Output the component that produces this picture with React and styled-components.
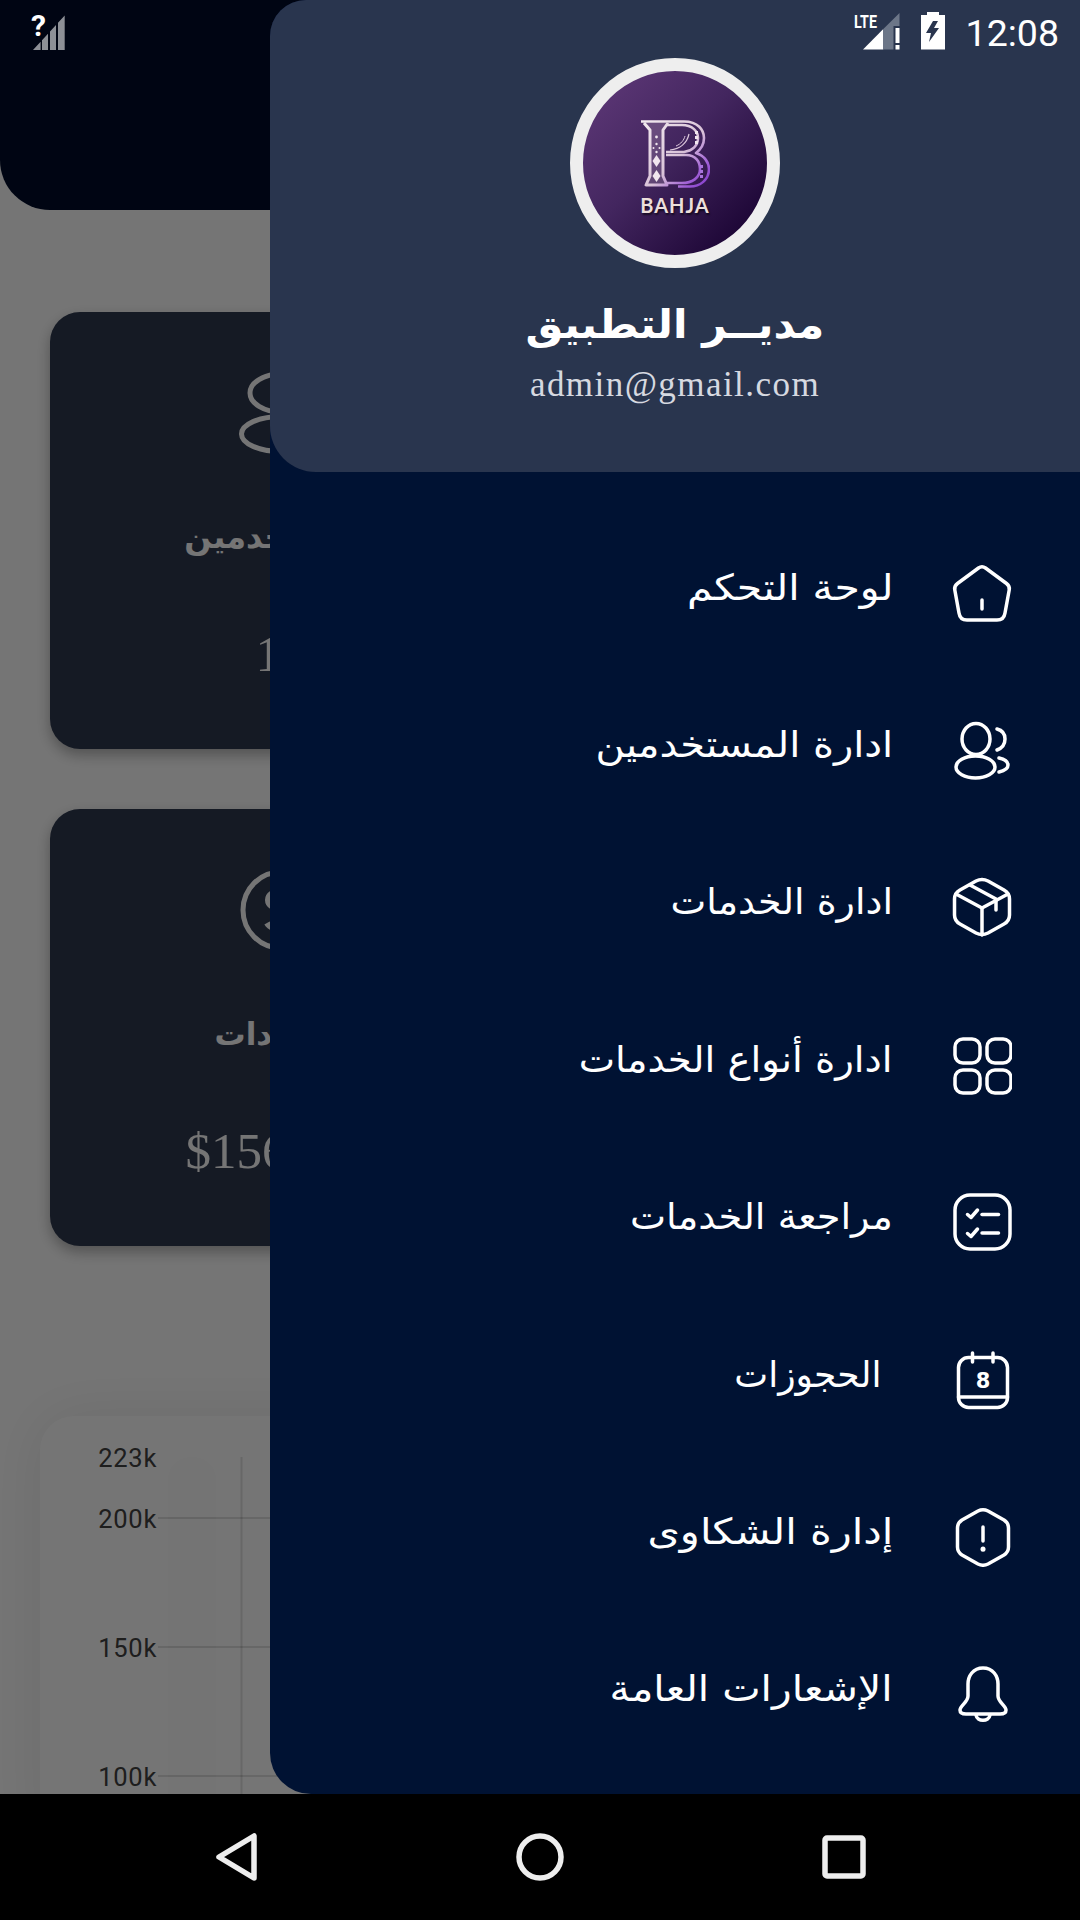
import React from "react";
import styled, { createGlobalStyle } from "styled-components";

const Global = createGlobalStyle`
  html, body { margin: 0; padding: 0; background: #000; }
  * { box-sizing: border-box; }
`;

const ARABIC = `"DejaVu Sans", "Noto Sans", sans-serif`;

const Screen = styled.div`
  position: relative;
  width: 1080px;
  height: 1920px;
  overflow: hidden;
  display: flex;
  flex-direction: column;
  background: #000;
  font-family: Roboto, sans-serif;
`;

const Page = styled.main`
  position: relative;
  height: 1794px;
  background: #fff;
  overflow: hidden;
`;

const TopBanner = styled.div`
  height: 210px;
  background: #000d2b;
  border-bottom-left-radius: 50px;
  border-bottom-right-radius: 50px;
`;

const Cards = styled.section`
  display: flex;
  flex-direction: column;
  gap: 60px;
  width: 462px;
  margin: 102px 0 0 50px;
`;

const Card = styled.article`
  height: 437px;
  border-radius: 30px;
  background: #2e3950;
  box-shadow: 0 6px 14px rgba(0, 0, 0, 0.3);
  color: #fff;
  display: flex;
  flex-direction: column;
  align-items: center;
  padding-top: 60px;
`;

const CardLabel = styled.div`
  margin-top: 58px;
  height: 50px;
  font: 700 ${(p) => p.$size}px/50px ${ARABIC};
  white-space: nowrap;
`;

const CardValue = styled.div`
  margin-top: 60px;
  font: 400 51px/64px "Liberation Serif", serif;
  white-space: nowrap;
`;

const ChartCard = styled.section`
  width: 900px;
  height: 420px;
  margin: 170px 0 0 40px;
  border-radius: 34px 34px 0 0;
  background: #fff;
  box-shadow: 0 0 60px rgba(0, 0, 0, 0.08);
  overflow: hidden;
`;

const Scrim = styled.div`
  position: absolute;
  inset: 0;
  background: rgba(0, 0, 0, 0.54);
`;

const Drawer = styled.aside`
  position: absolute;
  top: 0;
  right: 0;
  bottom: 0;
  width: 810px;
  background: #001233;
  border-radius: 36px 0 0 41px;
  display: flex;
  flex-direction: column;
`;

const DrawerHeader = styled.header`
  height: 472px;
  padding: 58px 0 0 0;
  background: #29354e;
  border-radius: 36px 0 0 46px;
  display: flex;
  flex-direction: column;
  align-items: center;
  color: #fff;
`;

const Avatar = styled.div`
  width: 210px;
  height: 210px;
  border: 13px solid #eeeeee;
  border-radius: 50%;
  background: linear-gradient(135deg, #613a7a 0%, #43265f 45%, #1f0838 85%);
  display: flex;
  flex-direction: column;
  align-items: center;
  padding-top: 49px;
`;

const LogoText = styled.div`
  margin-top: 5px;
  font: 700 20px/24px Lato, sans-serif;
  letter-spacing: 1px;
  color: #ecdfdb;
  text-shadow: 1px 2px 2px rgba(0, 0, 0, 0.6);
`;

const Name = styled.h1`
  margin: 28px 0 0;
  font: 700 40px/56px ${ARABIC};
  white-space: nowrap;
  transform: scaleX(1.06);
`;

const Email = styled.div`
  margin-top: 11px;
  font: 400 35px/44px "Liberation Serif", serif;
  letter-spacing: 1.45px;
  color: #d6d9e0;
`;

const Menu = styled.nav`
  display: flex;
  flex-direction: column;
  padding-top: 42px;
`;

const Row = styled.a`
  direction: rtl;
  height: 157.4px;
  display: flex;
  align-items: center;
  gap: 59px;
  padding-right: 68px;
  color: #fff;
`;

const RowLabel = styled.span`
  font: 400 36px/50px ${ARABIC};
  white-space: pre;
  transform-origin: right center;
  transform: translateY(-5px) scaleX(${(p) => p.$stretch});
`;

const Glyph = styled.svg`
  flex: none;
  width: 60px;
  height: 60px;
  fill: none;
  stroke: #fff;
  stroke-width: 3.5;
  stroke-linecap: round;
  stroke-linejoin: round;
`;

const CalendarDay = styled.text`
  font: 700 21px "DejaVu Sans", sans-serif;
  fill: #fff;
  stroke: none;
  text-anchor: middle;
`;

const StatusBar = styled.div`
  position: absolute;
  top: 0;
  left: 0;
  right: 0;
  height: 65px;
  padding: 13px 21px 0 28px;
  display: flex;
  align-items: flex-start;
  justify-content: space-between;
  color: #fff;
`;

const StatusGroup = styled.div`
  display: flex;
  align-items: flex-start;
  gap: 21px;
`;

const StatusIcon = styled.svg`
  display: block;
  overflow: visible;
  margin-top: ${(p) => p.$lift || 0}px;
`;

const Clock = styled.span`
  font: 400 37.5px/41px Roboto, sans-serif;
`;

const LteText = styled.text`
  font: 700 19px Roboto, sans-serif;
  fill: #fff;
`;

const SimText = styled.text`
  font: 700 30px Roboto, sans-serif;
  fill: #fff;
`;

const NavBar = styled.footer`
  flex: 1;
  background: #000;
  display: flex;
  align-items: center;
  justify-content: center;
  gap: 250px;
`;

const NavIcon = styled.svg`
  width: 54px;
  height: 54px;
  fill: none;
  stroke: #eeeeee;
  stroke-width: 5.5;
  stroke-linejoin: round;
`;

const AxisLabel = styled.text`
  font: 400 25.5px Roboto, sans-serif;
  fill: #424242;
  text-anchor: end;
  letter-spacing: 0.7px;
`;

const menuItems = [
  { label: "لوحة التحكم", icon: "home", stretch: 1.138 },
  { label: "ادارة المستخدمين", icon: "users", stretch: 1.11 },
  { label: "ادارة الخدمات", icon: "box", stretch: 1.055 },
  { label: "ادارة أنواع الخدمات", icon: "grid", stretch: 1.073 },
  { label: "مراجعة الخدمات", icon: "check", stretch: 1.065 },
  { label: "\u00a0الحجوزات", icon: "calendar", stretch: 1.0 },
  { label: "إدارة الشكاوى", icon: "warn", stretch: 1.153 },
  { label: "الإشعارات العامة", icon: "bell", stretch: 1.134 },
];

const iconParts = {
  home: (
    <>
      <path d="M26.5 5 Q30 2.5 33.5 5 L54.5 20.5 Q58 23 57.2 27 L53 50 Q52 57 45 57 L15 57 Q8 57 7 50 L2.8 27 Q2 23 5.5 20.5 Z" />
      <path d="M30 37 V46" />
    </>
  ),
  users: (
    <>
      <ellipse cx="24" cy="19" rx="14" ry="15.5" />
      <ellipse cx="23.5" cy="47" rx="19.5" ry="11" />
      <path d="M45 9 Q53 11 53 19 Q53 27 45 30" />
      <path d="M47 38 Q56 40 56 45 Q56 50 47 52" />
    </>
  ),
  box: (
    <>
      <path d="M24 4 Q30 1 36 4 L52 13 Q57.5 16 57.5 22 L57.5 38 Q57.5 44 52 47 L36 56 Q30 59 24 56 L8 47 Q2.5 44 2.5 38 L2.5 22 Q2.5 16 8 13 Z" />
      <path d="M4 17 L30 31 L56 17" />
      <path d="M30 31 V58" />
      <path d="M18 8 L44 22 V33" />
    </>
  ),
  grid: (
    <>
      <rect x="3" y="4" width="25" height="24" rx="8" />
      <rect x="35" y="4" width="24" height="24" rx="8" />
      <rect x="3" y="35" width="25" height="23" rx="8" />
      <rect x="35" y="35" width="24" height="23" rx="8" />
    </>
  ),
  check: (
    <>
      <rect x="3" y="3" width="55" height="54" rx="15" />
      <path d="M15.500 22.500 L19 25.500 L25.500 18" />
      <path d="M15.500 41.500 L19 44.500 L25.500 37" />
      <path d="M30 22.500 H46.500" />
      <path d="M30 41 H46.500" />
    </>
  ),
  calendar: (
    <>
      <rect x="6.500" y="7.500" width="49" height="50" rx="10" />
      <path d="M20.500 3 V12" />
      <path d="M41 3 V12" />
      <path d="M6.500 47 H55.500" />
      <CalendarDay x="31" y="38">8</CalendarDay>
    </>
  ),
  warn: (
    <>
      <path d="M26 4 Q31 1.500 36 4 L52 13 Q56.500 16 56.500 21 L56.500 40 Q56.500 45 52 48 L36 57 Q31 59.500 26 57 L10 48 Q5.500 45 5.500 40 L5.500 21 Q5.500 16 10 13 Z" />
      <path d="M31 20 V34" />
      <path d="M31 42 V42.200" strokeWidth="5" />
    </>
  ),
  bell: (
    <>
      <path d="M31 4 C21 4 16 12 16 20 L16 32 C16 38 8 42 8 46 C8 49 11 50 14 50 L48 50 C51 50 54 49 54 46 C54 42 46 38 46 32 L46 20 C46 12 41 4 31 4 Z" />
      <path d="M24 51 C25 58 37 58 38 51" />
    </>
  ),
};

function MenuGlyph({ name }) {
  return <Glyph viewBox="0 0 60 60">{iconParts[name]}</Glyph>;
}

function BahjaMark() {
  return (
    <svg width="70" height="68" viewBox="0 0 70 68" fill="none">
      <defs>
        <linearGradient id="bmark" x1="0" y1="0" x2="70" y2="68" gradientUnits="userSpaceOnUse">
          <stop offset="0" stopColor="#f4edf1" />
          <stop offset="0.55" stopColor="#d9c2d8" />
          <stop offset="0.8" stopColor="#a05fd6" />
          <stop offset="1" stopColor="#7e35c9" />
        </linearGradient>
      </defs>
      <path d="M4 3 L10 10 L10 56 L6 65 L27 65 L23 56 L23 10 L28 3 Z" fill="#d9c5d8" fillOpacity="0.22" />
      <g stroke="url(#bmark)" strokeWidth="2.6" strokeLinejoin="round">
        <path d="M1 1.500 L44 1.500 C58 1.500 64 10 64 18 C64 25 60 30 56 33 C65 36 69 43 69 49 C69 60 60 66.500 50 66.500 L38 66.500" />
        <path d="M26 5 L42 5 C52 5 58 11 58 18 C58 26 52 31 44 32 L26 32" />
        <path d="M26 35 L46 35 C56 35 60 42 60 49 C60 58 52 63 42 63 L26 63" />
        <path d="M4 3 L10 10 L10 56 L6 65 L27 65 L23 56 L23 10 L28 3" strokeWidth="3" />
        <path d="M30 30 C40 29 47 23 49 14" strokeWidth="1.200" />
        <path d="M36 26 C41 24 44 20 45 16" strokeWidth="1" />
      </g>
      <g fill="#f1e6ee">
        <circle cx="16.500" cy="17" r="1.400" />
        <circle cx="16.500" cy="24" r="1.200" />
        <circle cx="13.500" cy="28" r="1" />
        <circle cx="19.500" cy="28" r="1" />
        <circle cx="16.500" cy="32" r="1.200" />
        <path d="M16.500 35 L20.500 41 L16.500 47 L12.500 41 Z" />
        <path d="M16.500 50 L20.500 56 L16.500 62 L12.500 56 Z" />
        <rect x="55" y="11" width="3" height="3" />
        <rect x="55" y="16" width="3" height="3" />
        <rect x="55" y="21" width="3" height="3" />
      </g>
      <g fill="#a974de">
        <rect x="60" y="45" width="3" height="3" />
        <rect x="60" y="50" width="3" height="3" />
        <rect x="60" y="55" width="3" height="3" />
      </g>
    </svg>
  );
}

function SimUnknown() {
  return (
    <StatusIcon $lift={-3.5} width="38" height="40" viewBox="0 0 38 40">
      <SimText x="3" y="25.500">?</SimText>
      <path d="M5 40 L12.600 31.700 V40 Z M14 40 V30.200 L20 23.700 V40 Z M22 40 V21.500 L28 15 V40 Z M30 40 V12.800 L36.700 5.500 V40 Z" fill="#8d9096" />
    </StatusIcon>
  );
}

function LteSignal() {
  return (
    <StatusIcon width="46" height="37" viewBox="0 0 46 37">
      <g transform="scale(0.75 1)">
        <LteText x="0" y="15">LTE</LteText>
      </g>
      <path d="M9 36.500 L29.300 16 V36.500 Z" fill="#fff" />
      <path d="M29.300 16 L45.500 0 V13 H39.500 V36.500 H29.300 Z" fill="#6c7688" />
      <path d="M41.500 15 H45.500 V30 H41.500 Z M41.500 32 H45.500 V36.500 H41.500 Z" fill="#fff" />
    </StatusIcon>
  );
}

function Battery() {
  return (
    <StatusIcon $lift={-1} width="24" height="38" viewBox="0 0 24 38">
      <path d="M6 0 H18 V3 H24 V37.500 H0 V3 H6 Z" fill="#fff" />
      <path d="M12 9 L5 21 H10 L8 30 L18 16 H13 L17 9 Z" fill="#29354e" />
    </StatusIcon>
  );
}

function Axis() {
  return (
    <svg width="900" height="420" viewBox="0 0 900 420">
      <rect x="128" y="41" width="48" height="380" rx="22" fill="#000" opacity="0.012" />
      <path d="M201.500 41 V420" stroke="#000" strokeOpacity="0.12" strokeWidth="2" />
      <path d="M118 102 H900 M118 231 H900 M118 360 H900" stroke="#000" strokeOpacity="0.12" strokeWidth="2" />
      <AxisLabel x="117" y="51">223k</AxisLabel>
      <AxisLabel x="117" y="112">200k</AxisLabel>
      <AxisLabel x="117" y="241">150k</AxisLabel>
      <AxisLabel x="117" y="370">100k</AxisLabel>
    </svg>
  );
}

export default function App() {
  return (
    <Screen>
      <Global />
      <Page>
        <TopBanner />
        <Cards>
          <Card>
            <svg width="84" height="82" viewBox="0 0 84 82" fill="none" stroke="#fff" strokeWidth="5">
              <ellipse cx="42" cy="21" rx="31" ry="19" />
              <ellipse cx="42" cy="62" rx="39.500" ry="17.500" />
            </svg>
            <CardLabel $size={32}>المستخدمين</CardLabel>
            <CardValue>12</CardValue>
          </Card>
          <Card>
            <svg width="82" height="82" viewBox="0 0 82 82" fill="none" stroke="#fff" strokeWidth="5">
              <circle cx="41" cy="41" r="38" />
              <path d="M54 28 C50 20 28 20 28 31 C28 44 56 38 56 52 C56 63 32 63 27 54 M41 14 V68" strokeWidth="6" />
            </svg>
            <CardLabel $size={31}>الايرادات</CardLabel>
            <CardValue>$156,000</CardValue>
          </Card>
        </Cards>
        <ChartCard>
          <Axis />
        </ChartCard>
        <Scrim />
        <Drawer>
          <DrawerHeader>
            <Avatar>
              <BahjaMark />
              <LogoText>BAHJA</LogoText>
            </Avatar>
            <Name>مديــر التطبيق</Name>
            <Email>admin@gmail.com</Email>
          </DrawerHeader>
          <Menu>
            {menuItems.map((item) => (
              <Row key={item.icon}>
                <MenuGlyph name={item.icon} />
                <RowLabel $stretch={item.stretch}>{item.label}</RowLabel>
              </Row>
            ))}
          </Menu>
        </Drawer>
        <StatusBar>
          <SimUnknown />
          <StatusGroup>
            <LteSignal />
            <Battery />
            <Clock>12:08</Clock>
          </StatusGroup>
        </StatusBar>
      </Page>
      <NavBar>
        <NavIcon viewBox="0 0 54 54">
          <path d="M10 27 L45 6 V48 Z" />
        </NavIcon>
        <NavIcon viewBox="0 0 54 54">
          <circle cx="27" cy="27" r="21" />
        </NavIcon>
        <NavIcon viewBox="0 0 54 54">
          <rect x="8" y="8" width="38" height="38" rx="2" />
        </NavIcon>
      </NavBar>
    </Screen>
  );
}
